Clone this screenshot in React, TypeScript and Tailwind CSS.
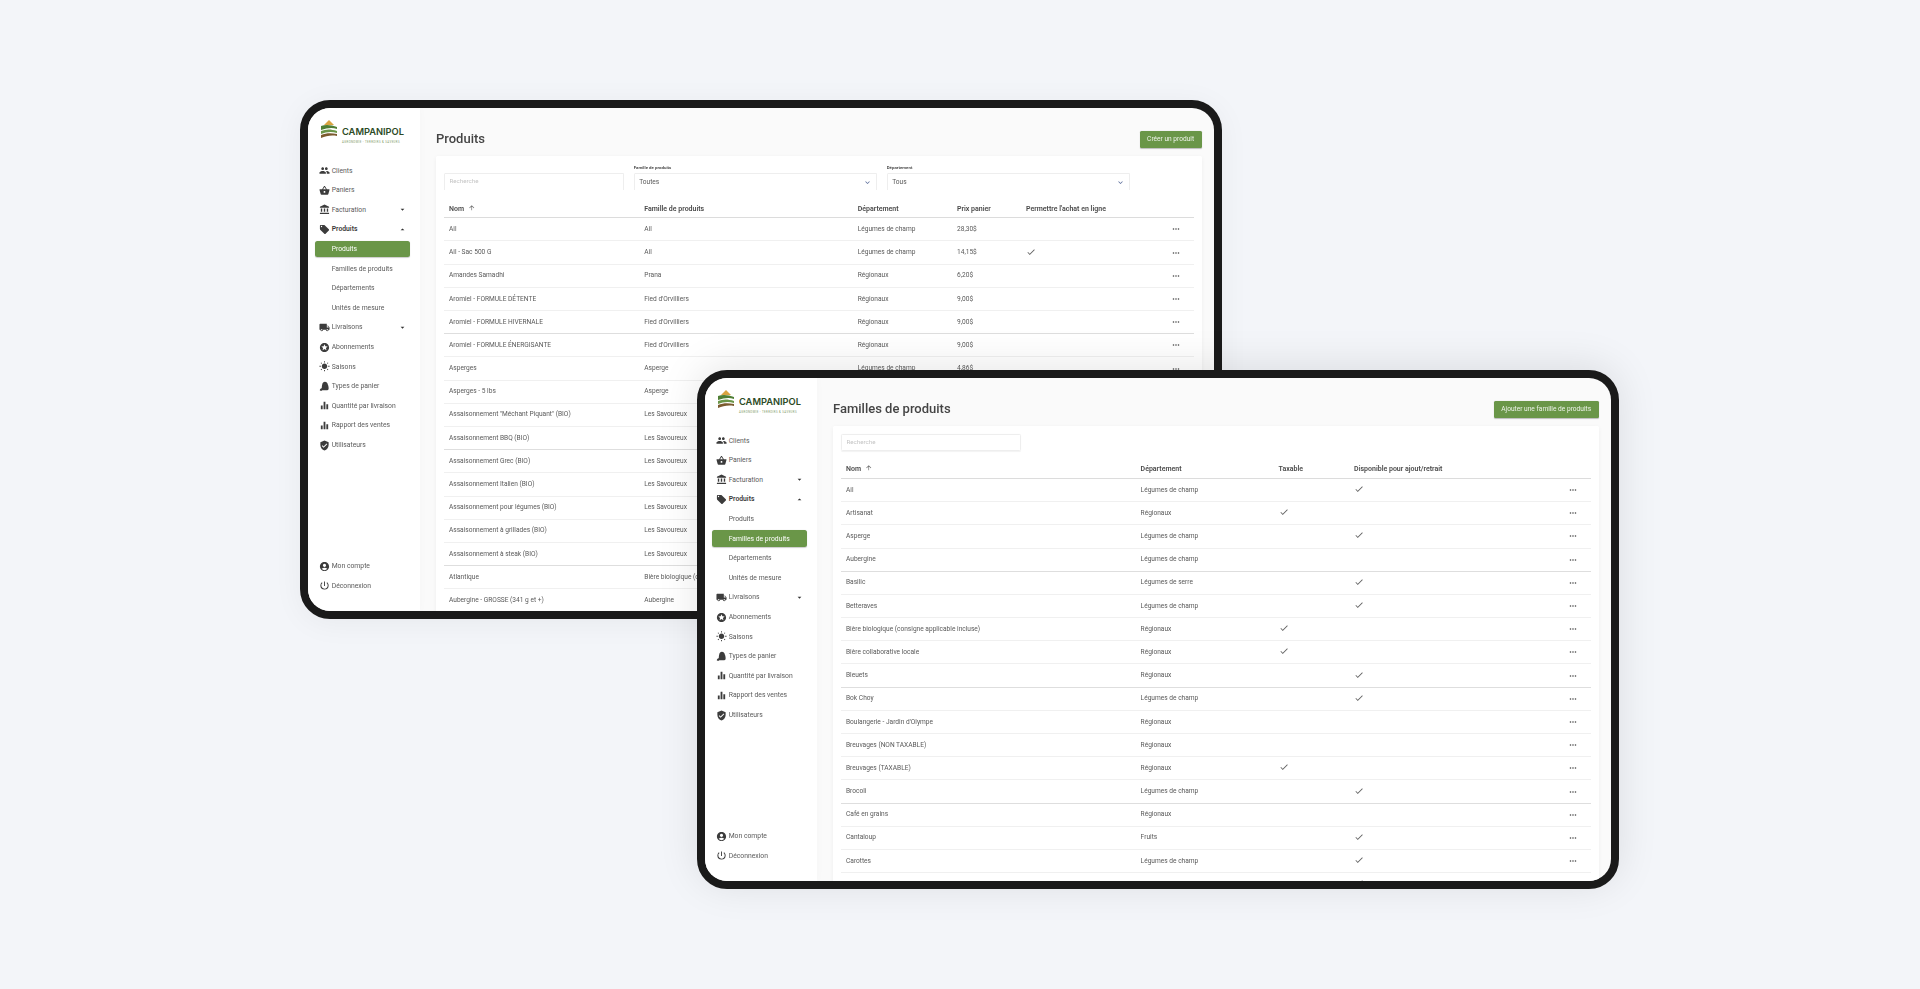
import { ReactNode } from "react"
import {
  MdPeople,
  MdShoppingBasket,
  MdAccountBalance,
  MdLocalOffer,
  MdLocalShipping,
  MdStars,
  MdWbSunny,
  MdEqualizer,
  MdVerifiedUser,
  MdAccountCircle,
  MdPowerSettingsNew,
  MdMoreHoriz,
  MdCheck,
  MdArrowUpward,
  MdArrowDropDown,
  MdArrowDropUp,
  MdKeyboardArrowDown,
} from "react-icons/md"

const DARK_EVERY = 5

function Logo() {
  return (
    <div className="flex items-start gap-[5px]">
      <svg width="16" height="18" viewBox="0 0 16 18" className="shrink-0 mt-[1px]">
        <path d="M8 0 L13 5 L3 5 Z" fill="#d9a441" />
        <path d="M0 6 C5 4 11 5 16 7 L16 9 C11 7 6 8 0 10 Z" fill="#4f7f35" />
        <path d="M0 11 C5 9 10 9 16 11 L16 13 C10 11 5 12 0 14 Z" fill="#6a9648" />
        <path d="M0 15 C5 13 10 13 16 14 L16 16 C10 15 5 16 0 18 Z" fill="#7b5a2e" />
      </svg>
      <div className="flex flex-col items-start mt-[7px]">
        <span className="text-[9.3px] leading-[12px] font-semibold text-[#2c4a25] font-['Inter',sans-serif]">CAMPANIPOL</span>
        <span className="text-[2.8px] leading-[6px] mt-[1px] text-[#7d9a66] tracking-[0.4px] whitespace-nowrap">AGRONOMIE - TERROIRS &amp; SAVEURS</span>
      </div>
    </div>
  )
}

function BasketTypeIcon() {
  return (
    <svg viewBox="0 0 24 24" className="w-[11px] h-[11px]" fill="currentColor">
      <path d="M9 3c2-1.5 6-1.5 8 0 2 2 4 8 4 12 0 3-1 5-3 5H8c-2 0-2-2-2-4 0-5 1-11 3-13z" />
      <path d="M2 19c1-2 3-3 5-3v5H3c-1 0-1.5-1-1-2z" />
    </svg>
  )
}

function Item({ icon, label, caret, bold }: { icon: ReactNode; label: string; caret?: "up" | "down"; bold?: boolean }) {
  return (
    <div className="h-[19.6px] flex items-center pl-[4px] pr-[3px]">
      <span className="w-[12.7px] shrink-0 flex items-center text-[#3c3c3c] text-[11px]">{icon}</span>
      <span className={bold ? "flex-1 text-[6.8px] font-semibold text-[#3a3a3a]" : "flex-1 text-[6.8px] text-[#5a5a5a]"}>{label}</span>
      {caret === "down" && <MdArrowDropDown className="text-[9px] text-[#333]" />}
      {caret === "up" && <MdArrowDropUp className="text-[9px] text-[#333]" />}
    </div>
  )
}

function SubItem({ label, active }: { label: string; active: boolean }) {
  return (
    <div className="h-[19.6px] flex items-center">
      <div
        className={
          active
            ? "w-full h-[16.6px] flex items-center pl-[16.7px] rounded-[2.5px] bg-[#6a9648] text-white text-[6.8px] shadow-[0_0.5px_1px_rgba(0,0,0,0.2)]"
            : "w-full h-[16.6px] flex items-center pl-[16.7px] text-[#5a5a5a] text-[6.8px]"
        }
      >
        {label}
      </div>
    </div>
  )
}

function Sidebar({ active }: { active: string }) {
  const subs = ["Produits", "Familles de produits", "Départements", "Unités de mesure"]
  return (
    <aside className="w-[112px] shrink-0 h-full bg-white flex flex-col pl-[7px] pr-[10px] pt-[11px] pb-[15.5px] shadow-[1px_0_8px_rgba(0,0,0,0.02)]">
      <div className="pl-[6px] h-[41.9px]">
        <Logo />
      </div>
      <nav className="flex flex-col">
        <Item icon={<MdPeople />} label="Clients" />
        <Item icon={<MdShoppingBasket />} label="Paniers" />
        <Item icon={<MdAccountBalance />} label="Facturation" caret="down" />
        <Item icon={<MdLocalOffer />} label="Produits" caret="up" bold />
        {subs.map((s) => (
          <SubItem key={s} label={s} active={s === active} />
        ))}
        <Item icon={<MdLocalShipping />} label="Livraisons" caret="down" />
        <Item icon={<MdStars />} label="Abonnements" />
        <Item icon={<MdWbSunny />} label="Saisons" />
        <Item icon={<BasketTypeIcon />} label="Types de panier" />
        <Item icon={<MdEqualizer />} label="Quantité par livraison" />
        <Item icon={<MdEqualizer />} label="Rapport des ventes" />
        <Item icon={<MdVerifiedUser />} label="Utilisateurs" />
      </nav>
      <div className="mt-auto flex flex-col">
        <Item icon={<MdAccountCircle />} label="Mon compte" />
        <Item icon={<MdPowerSettingsNew />} label="Déconnexion" />
      </div>
    </aside>
  )
}

function Check() {
  return <MdCheck className="text-[10px] text-[#666] -mt-[2px]" />
}

function Dots() {
  return <MdMoreHoriz className="text-[10px] text-[#444]" />
}

function Frame({ className, active, title, action, children }: { className: string; active: string; title: string; action: string; children: ReactNode }) {
  return (
    <div className={className}>
      <div className="w-full h-full rounded-[22px] overflow-hidden flex bg-[#fafafa] blur-[0.45px]">
        <Sidebar active={active} />
        <main className="flex-1 min-w-0 pl-[16px] pr-[12.4px] flex flex-col">
          <div className="h-[48px] shrink-0 flex items-center justify-between pt-[17px] pb-[2px]">
            <h1 className="text-[13px] font-medium text-[#444] -mt-[1px]">{title}</h1>
            <button className="h-[16.6px] px-[7.5px] rounded-[1.5px] bg-[#6a9648] text-[#eef3ea] text-[6.6px] shadow-[0_0.5px_1px_rgba(0,0,0,0.25)]">{action}</button>
          </div>
          <div className="flex-1 bg-white rounded-t-[2px] px-[8px] shadow-[0_1px_4px_rgba(0,0,0,0.05)]">{children}</div>
        </main>
      </div>
    </div>
  )
}

function HeaderRow({ cols, grid }: { cols: string[]; grid: string }) {
  return (
    <div className={grid + " h-[18px] mt-[10.3px] items-center border-b border-[#dcdcdc] text-[7px] font-semibold text-[#4a4a4a]"}>
      {cols.map((c, i) => (
        <div key={c} className="pl-[5px] flex items-center whitespace-nowrap">
          {c}
          {i === 0 && <MdArrowUpward className="ml-[4px] -mt-[3px] text-[7.5px] text-[#666]" />}
        </div>
      ))}
      <div />
    </div>
  )
}

const productRows = [
  ["Ail", "Ail", "Légumes de champ", "28,30$", false],
  ["Ail - Sac 500 G", "Ail", "Légumes de champ", "14,15$", true],
  ["Amandes Samadhi", "Prana", "Régionaux", "6,20$", false],
  ["Aromiel - FORMULE DÉTENTE", "Fied d'Orvilliers", "Régionaux", "9,00$", false],
  ["Aromiel - FORMULE HIVERNALE", "Fied d'Orvilliers", "Régionaux", "9,00$", false],
  ["Aromiel - FORMULE ÉNERGISANTE", "Fied d'Orvilliers", "Régionaux", "9,00$", false],
  ["Asperges", "Asperge", "Légumes de champ", "4,86$", false],
  ["Asperges - 5 lbs", "Asperge", "Légumes de champ", "21,00$", false],
  ["Assaisonnement \"Méchant Piquant\" (BIO)", "Les Savoureux", "Régionaux", "5,50$", false],
  ["Assaisonnement BBQ (BIO)", "Les Savoureux", "Régionaux", "5,50$", false],
  ["Assaisonnement Grec (BIO)", "Les Savoureux", "Régionaux", "5,50$", false],
  ["Assaisonnement Italien (BIO)", "Les Savoureux", "Régionaux", "5,50$", false],
  ["Assaisonnement pour légumes (BIO)", "Les Savoureux", "Régionaux", "5,50$", false],
  ["Assaisonnement à grillades (BIO)", "Les Savoureux", "Régionaux", "5,50$", false],
  ["Assaisonnement à steak (BIO)", "Les Savoureux", "Régionaux", "5,50$", false],
  ["Atlantique", "Bière biologique (consigne applicable incluse)", "Régionaux", "4,50$", false],
  ["Aubergine - GROSSE (341 g et +)", "Aubergine", "Légumes de champ", "3,25$", false],
] as const

const familyRows = [
  ["Ail", "Légumes de champ", false, true],
  ["Artisanat", "Régionaux", true, false],
  ["Asperge", "Légumes de champ", false, true],
  ["Aubergine", "Légumes de champ", false, false],
  ["Basilic", "Légumes de serre", false, true],
  ["Betteraves", "Légumes de champ", false, true],
  ["Bière biologique (consigne applicable incluse)", "Régionaux", true, false],
  ["Bière collaborative locale", "Régionaux", true, false],
  ["Bleuets", "Régionaux", false, true],
  ["Bok Choy", "Légumes de champ", false, true],
  ["Boulangerie - Jardin d'Olympe", "Régionaux", false, false],
  ["Breuvages (NON TAXABLE)", "Régionaux", false, false],
  ["Breuvages (TAXABLE)", "Régionaux", true, false],
  ["Brocoli", "Légumes de champ", false, true],
  ["Café en grains", "Régionaux", false, false],
  ["Cantaloup", "Fruits", false, true],
  ["Carottes", "Légumes de champ", false, true],
  ["", "", false, true],
] as const

function rowClass(grid: string, dark: boolean) {
  return (
    grid +
    (dark
      ? " h-[23.2px] items-center border-b border-[#dedede] text-[6.6px] text-[#595959]"
      : " h-[23.2px] items-center border-b border-[#f0f0f0] text-[6.6px] text-[#595959]")
  )
}

const productGrid = "grid grid-cols-[195.3px_213.4px_99.3px_69px_1fr_34px]"
const familyGrid = "grid grid-cols-[294.6px_138px_75.5px_1fr_34px]"

function Products() {
  return (
    <div>
      <div className="flex items-end pt-[17px] gap-[10px]">
        <div className="w-[180px] h-[17px] border border-b-0 border-[#eeeeee] rounded-t-[1.5px] flex items-center pl-[4.5px] text-[6.2px] text-[#c4c4c4]">Recherche</div>
        <div className="w-[243px] -ml-[0.3px] relative h-[17px] border border-b-0 border-[#eeeeee] rounded-t-[1.5px] flex items-center justify-between pl-[4.5px] pr-[4px] pt-[1px] text-[6.6px] text-[#595959]">
          Toutes
          <MdKeyboardArrowDown className="text-[9px] text-[#5a6c9a] -mt-[1px]" />
          <span className="absolute -left-[1px] -top-[9px] text-[4.4px] font-semibold text-[#444]">Famille de produits</span>
        </div>
        <div className="w-[243px] relative h-[17px] border border-b-0 border-[#eeeeee] rounded-t-[1.5px] flex items-center justify-between pl-[4.5px] pr-[4px] pt-[1px] text-[6.6px] text-[#595959]">
          Tous
          <MdKeyboardArrowDown className="text-[9px] text-[#5a6c9a] -mt-[1px]" />
          <span className="absolute -left-[1px] -top-[9px] text-[4.4px] font-semibold text-[#444]">Département</span>
        </div>
      </div>
      <HeaderRow grid={productGrid} cols={["Nom", "Famille de produits", "Département", "Prix panier", "Permettre l'achat en ligne"]} />
      {productRows.map((r, i) => (
        <div key={r[0]} className={rowClass(productGrid, i % DARK_EVERY === 4)}>
          <div className="pl-[5px] pt-[1px] whitespace-nowrap">{r[0]}</div>
          <div className="pl-[5px] pt-[1px] whitespace-nowrap overflow-hidden">{r[1]}</div>
          <div className="pl-[5px] pt-[1px] whitespace-nowrap">{r[2]}</div>
          <div className="pl-[5px] pt-[1px]">{r[3]}</div>
          <div className="pl-[5px]">{r[4] && <Check />}</div>
          <div className="flex justify-center pr-[1px]">
            <Dots />
          </div>
        </div>
      ))}
    </div>
  )
}

function Families() {
  return (
    <div>
      <div className="pt-[8px]">
        <div className="w-[180px] h-[16.7px] border border-[#eeeeee] rounded-[1.5px] flex items-center pl-[4.5px] text-[6.2px] text-[#c4c4c4] shadow-[0_0.5px_1px_rgba(0,0,0,0.05)]">Recherche</div>
      </div>
      <HeaderRow grid={familyGrid} cols={["Nom", "Département", "Taxable", "Disponible pour ajout/retrait"]} />
      {familyRows.map((r, i) => (
        <div key={i} className={rowClass(familyGrid, i % DARK_EVERY === 3)}>
          <div className="pl-[5px] pt-[1px] whitespace-nowrap">{r[0]}</div>
          <div className="pl-[5px] pt-[1px] whitespace-nowrap">{r[1]}</div>
          <div className="pl-[5px]">{r[2] && <Check />}</div>
          <div className="pl-[5px]">{r[3] && <Check />}</div>
          <div className="flex justify-center pr-[1px]">{r[0] && <Dots />}</div>
        </div>
      ))}
    </div>
  )
}

export default function App() {
  return (
    <div className="relative w-[1920px] h-[989px] overflow-hidden bg-[#f3f5f9] font-['Roboto',sans-serif]">
      <Frame
        className="absolute left-[300px] top-[100px] w-[922px] h-[519px] border-[8px] border-[#1a1a1a] rounded-[30px] bg-[#1a1a1a] shadow-[0_4px_30px_rgba(0,0,0,0.05)]"
        active="Produits"
        title="Produits"
        action="Créer un produit"
      >
        <Products />
      </Frame>
      <Frame
        className="absolute left-[697px] top-[370px] w-[922px] h-[519px] border-[8px] border-[#1a1a1a] rounded-[30px] bg-[#1a1a1a] shadow-[0_-4px_40px_rgba(0,0,0,0.1)]"
        active="Familles de produits"
        title="Familles de produits"
        action="Ajouter une famille de produits"
      >
        <Families />
      </Frame>
    </div>
  )
}
